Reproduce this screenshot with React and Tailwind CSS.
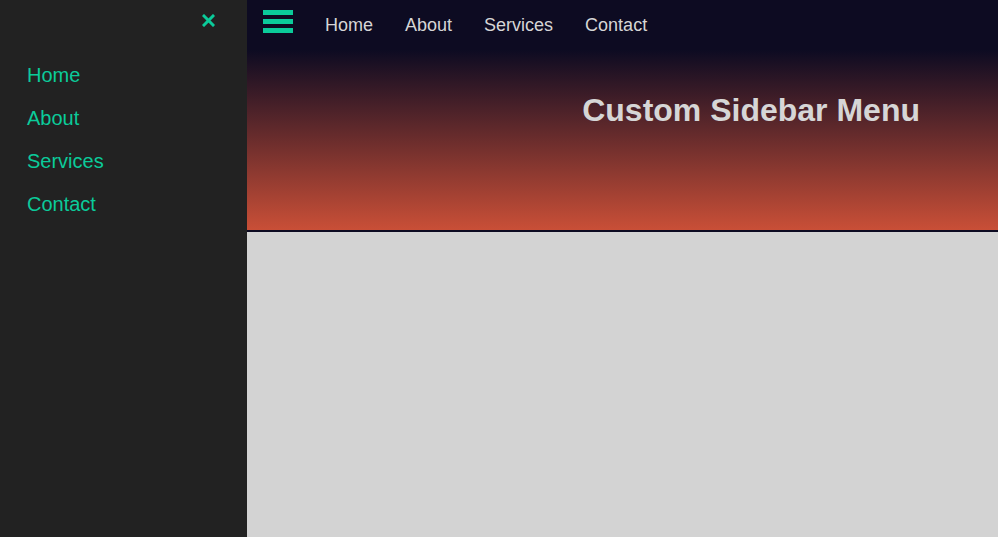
import React from "react";

const links = ["Home", "About", "Services", "Contact"];

const App = () => {
  return (
    <div
      className="flex h-[537px] w-[998px] overflow-hidden bg-[#d3d3d3]"
      style={{ fontFamily: '"Liberation Sans", Arial, sans-serif' }}
    >
      <aside className="flex w-[247px] shrink-0 flex-col bg-[#222222]">
        <div className="flex h-[40px] justify-end pr-[32px] pt-[14px]">
          <button className="h-[13px] w-[13px]">
            <svg viewBox="0 0 13 13" width="13" height="13">
              <path
                d="M2 2 L11 11 M11 2 L2 11"
                stroke="#0bcb9a"
                strokeWidth="3"
                strokeLinecap="square"
              />
            </svg>
          </button>
        </div>
        <nav className="flex flex-col pl-[27px] pt-[21px]">
          {links.map((l) => (
            <a
              key={l}
              href="#"
              className="h-[43px] text-[20px] leading-[28px] text-[#0bcb9a]"
            >
              {l}
            </a>
          ))}
        </nav>
      </aside>

      <div className="flex flex-1 flex-col">
        <header className="border-b-2 border-[#0d0b22] bg-[linear-gradient(to_bottom,#0d0b22_0px,#0d0b22_50px,#c94f37_230px)]">
          <nav className="flex h-[50px] items-start pl-[16px] pt-[10px]">
            <button className="flex h-[23px] w-[30px] flex-col justify-between">
              <span className="h-[5px] w-full bg-[#0bcb9a]" />
              <span className="h-[5px] w-full bg-[#0bcb9a]" />
              <span className="h-[5px] w-full bg-[#0bcb9a]" />
            </button>
            <ul className="ml-[32px] flex gap-[32px]">
              {links.map((l) => (
                <li key={l}>
                  <a
                    href="#"
                    className="text-[18px] leading-[30px] text-[#d6d6d6]"
                  >
                    {l}
                  </a>
                </li>
              ))}
            </ul>
          </nav>
          <div className="flex h-[180px] justify-end pr-[78px] pt-[42px]">
            <h1 className="text-[32px] font-bold leading-[36px] text-[#d6d6d6]">
              Custom Sidebar Menu
            </h1>
          </div>
        </header>
        <main className="flex-1" />
      </div>
    </div>
  );
};

export default App;
